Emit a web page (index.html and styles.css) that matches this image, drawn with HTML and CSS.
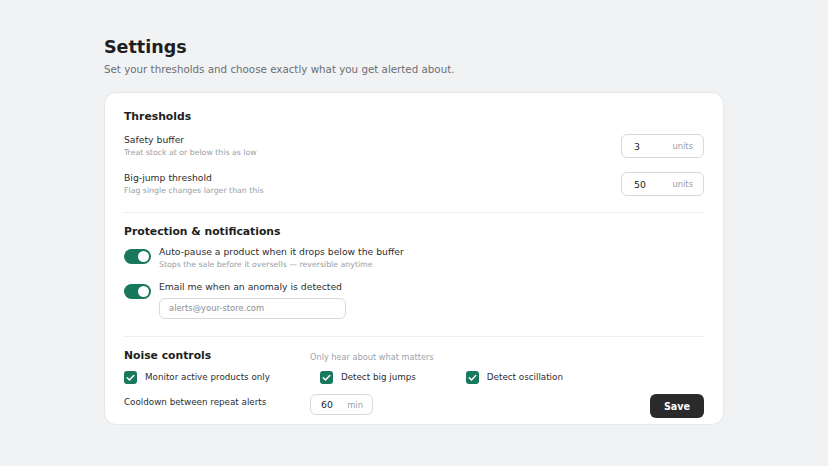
FILE: index.html
```html
<!DOCTYPE html>
<html lang="en">
<head>
    <meta charset="UTF-8">
    <meta name="viewport" content="width=device-width, initial-scale=1.0">
    <title>Settings</title>
    <link rel="stylesheet" href="styles.css">
</head>
<body>
    <div class="page">
        <h1>Settings</h1>
        <p class="subtitle">Set your thresholds and choose exactly what you get alerted about.</p>

        <div class="card">
            <!-- Thresholds -->
            <div class="section section-first">
                <h2>Thresholds</h2>
                <div class="row">
                    <div class="label-block">
                        <div class="label">Safety buffer</div>
                        <div class="helper">Treat stock at or below this as low</div>
                    </div>
                    <div class="num-input">
                        <span class="value">3</span>
                        <span class="unit">units</span>
                    </div>
                </div>
                <div class="row">
                    <div class="label-block">
                        <div class="label">Big-jump threshold</div>
                        <div class="helper">Flag single changes larger than this</div>
                    </div>
                    <div class="num-input">
                        <span class="value">50</span>
                        <span class="unit">units</span>
                    </div>
                </div>
            </div>

            <!-- Protection -->
            <div class="section">
                <h2>Protection &amp; notifications</h2>
                <div class="toggle-row">
                    <span class="toggle"><span class="knob"></span></span>
                    <div class="label-block">
                        <div class="label">Auto-pause a product when it drops below the buffer</div>
                        <div class="helper">Stops the sale before it oversells — reversible anytime</div>
                    </div>
                </div>
                <div class="toggle-row">
                    <span class="toggle"><span class="knob"></span></span>
                    <div class="label-block">
                        <div class="label">Email me when an anomaly is detected</div>
                        <div class="email-input">alerts@your-store.com</div>
                    </div>
                </div>
            </div>

            <!-- Noise -->
            <div class="section section-last">
                <div class="noise-head">
                    <h2>Noise controls</h2>
                    <span class="hint">Only hear about what matters</span>
                </div>
                <div class="checks">
                    <label class="check"><span class="box"><svg viewBox="0 0 14 14" width="13" height="13"><path d="M3.5 7.2l2.4 2.4 4.6-4.8" fill="none" stroke="#fff" stroke-width="1.6" stroke-linecap="round" stroke-linejoin="round"/></svg></span>Monitor active products only</label>
                    <label class="check"><span class="box"><svg viewBox="0 0 14 14" width="13" height="13"><path d="M3.5 7.2l2.4 2.4 4.6-4.8" fill="none" stroke="#fff" stroke-width="1.6" stroke-linecap="round" stroke-linejoin="round"/></svg></span>Detect big jumps</label>
                    <label class="check"><span class="box"><svg viewBox="0 0 14 14" width="13" height="13"><path d="M3.5 7.2l2.4 2.4 4.6-4.8" fill="none" stroke="#fff" stroke-width="1.6" stroke-linecap="round" stroke-linejoin="round"/></svg></span>Detect oscillation</label>
                </div>
                <div class="cooldown-row">
                    <span class="cooldown-label">Cooldown between repeat alerts</span>
                    <div class="num-input small">
                        <span class="value">60</span>
                        <span class="unit">min</span>
                    </div>
                    <button type="button" class="save">Save</button>
                </div>
            </div>
        </div>
    </div>
</body>
</html>
```

FILE: styles.css
```css
body {
    margin: 0;
    background-color: #f1f2f4;
    font-family: "DejaVu Sans", sans-serif;
    color: #202326;
}
.page {
    width: 620px;
    margin: 0 auto;
    padding-top: 36px;
}
h1 {
    font-size: 17.5px;
    line-height: 22px;
    margin: 0;
    color: #1c1e21;
}
.subtitle {
    font-size: 10.3px;
    line-height: 14px;
    margin: 4px 0 16px;
    color: #6b6f75;
}
.card {
    background: #fff;
    border: 1px solid #e6e8eb;
    border-radius: 12px;
    padding: 0 19px;
}
.section {
    padding: 12px 0 17px;
    border-bottom: 1px solid #eceef0;
}
.section-first {
    padding-top: 17px;
    padding-bottom: 16px;
}
.section-last {
    border-bottom: none;
    padding-bottom: 6px;
}
h2 {
    font-size: 10.8px;
    line-height: 14px;
    margin: 0;
    color: #1c1e21;
}
.label {
    font-size: 9.25px;
    line-height: 12px;
    color: #2b2e32;
}
.helper {
    font-size: 7.8px;
    line-height: 11px;
    margin-top: 1px;
    color: #9a9ea4;
}
.row {
    display: flex;
    justify-content: space-between;
    align-items: center;
    margin-top: 10px;
}
.row + .row {
    margin-top: 14px;
}
.num-input {
    width: 83px;
    height: 24px;
    box-sizing: border-box;
    border: 1px solid #d6d9dd;
    border-radius: 6px;
    display: flex;
    align-items: center;
    justify-content: space-between;
    padding: 0 10px 0 12px;
}
.num-input .value {
    font-size: 9.3px;
    color: #202326;
}
.num-input .unit {
    font-size: 8.4px;
    color: #9a9ea4;
}
.toggle-row {
    display: flex;
    align-items: flex-start;
    gap: 8px;
    margin-top: 7px;
}
.toggle-row + .toggle-row {
    margin-top: 11px;
}
.toggle {
    width: 27px;
    height: 15px;
    margin-top: 3px;
    border-radius: 8px;
    background: #17785b;
    position: relative;
    flex: none;
}
.knob {
    position: absolute;
    right: 2px;
    top: 2px;
    width: 11px;
    height: 11px;
    border-radius: 50%;
    background: #fff;
}
.email-input {
    margin-top: 5px;
    width: 187px;
    height: 21px;
    box-sizing: border-box;
    border: 1px solid #d6d9dd;
    border-radius: 6px;
    padding: 0 9px;
    font-size: 8.4px;
    line-height: 19px;
    color: #8a8e94;
}
.noise-head {
    display: flex;
    align-items: center;
}
.noise-head h2 {
    width: 186px;
}
.hint {
    font-size: 8.2px;
    color: #a0a4a9;
    margin-top: 2px;
}
.checks {
    display: flex;
    gap: 50px;
    margin-top: 7px;
}
.check {
    display: flex;
    align-items: center;
    gap: 8px;
    font-size: 8.75px;
    line-height: 14px;
    color: #2b2e32;
}
.box {
    width: 13px;
    height: 13px;
    border-radius: 3px;
    background: #17785b;
    display: flex;
}
.cooldown-row {
    display: flex;
    align-items: flex-start;
    margin-top: 10px;
}
.cooldown-label {
    width: 186px;
    margin-top: 2px;
    font-size: 8.75px;
    line-height: 12px;
    color: #2b2e32;
}
.num-input.small {
    width: 63px;
    height: 21px;
    padding: 0 9px 0 10px;
}
.save {
    margin-left: auto;
    width: 54px;
    height: 24px;
    border: none;
    border-radius: 6px;
    background: #2a2a2b;
    color: #fff;
    font-family: "DejaVu Sans", sans-serif;
    font-weight: bold;
    font-size: 9.6px;
}
```
